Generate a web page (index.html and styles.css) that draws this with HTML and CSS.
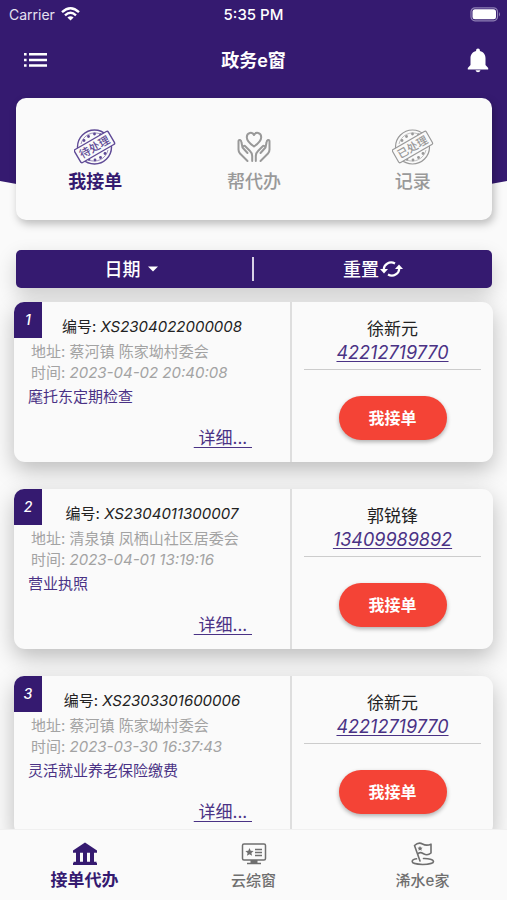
FILE: index.html
```html
<!DOCTYPE html>
<html lang="zh-CN">
<head>
<meta charset="utf-8">
<meta name="viewport" content="width=device-width, initial-scale=1">
<title>政务e窗</title>
<link rel="stylesheet" href="styles.css">
</head>
<body>
<svg class="curve" viewBox="0 0 100 206" preserveAspectRatio="none" aria-hidden="true"><path d="M0 0H100V181Q50 230 0 181Z" fill="#351a70"/></svg>
<div class="status">
  <span class="carrier">Carrier
    <svg width="19" height="14" viewBox="0 0 19 14" fill="none" stroke="#fff" stroke-width="2.4"><path d="M1 5.2Q9.500-2.600 18 5.200"/><path d="M4 8.300Q9.500 3.300 15 8.300"/><path d="M9.500 13.600L6.400 10.500Q9.500 8 12.600 10.500Z" fill="#fff" stroke="none"/></svg>
  </span>
  <span class="clock">5:35 PM</span>
  <span class="battery"><svg width="31" height="15" viewBox="0 0 31 15"><rect x="1" y=".8" width="26.500" height="13" rx="4" fill="none" stroke="#8f80b5" stroke-width="1.200"/><rect x="2.500" y="2.300" width="23.500" height="10" rx="2.500" fill="#fff"/><path d="M29 5Q31 7.300 29 9.600Z" fill="#8f80b5"/></svg></span>
</div>
<header class="bar">
  <button class="icon-btn" aria-label="菜单"><svg width="24" height="16" viewBox="0 0 24 16" fill="#fff"><path d="M0 1h2.600v2.600H0zM5 1h18v2.600H5zM0 6.700h2.600v2.600H0zM5 6.700h18v2.600H5zM0 12.200h2.600v2.600H0zM5 12.200h18v2.600H5z"/></svg></button>
  <h1>政务e窗</h1>
  <button class="icon-btn end" aria-label="通知"><svg width="22" height="25" viewBox="0 0 22 25" fill="#fff"><path d="M11 0.500c1.200 0 1.900.8 1.900 2v.4c3.800.9 5.600 3.800 5.600 7.300v6.800l2.700 3v1.500H.8v-1.500l2.700-3v-6.800c0-3.500 1.800-6.400 5.600-7.300v-.4c0-1.200.7-2 1.900-2z"/><path d="M8.500 22.300h5q-.6 2-2.500 2t-2.500-2z"/></svg></button>
</header>
<nav class="tabs">
  <a class="tab active" href="#orders">
    <svg width="42" height="38" viewBox="0 0 42 38" fill="none" stroke="currentColor" stroke-width="1.400"><circle cx="20.500" cy="19" r="17"/><path d="M7 16A14.200 14.200 0 0 1 27 6.300M34 22A14.200 14.200 0 0 1 14 31.700" stroke-width=".6"/><g fill="currentColor" stroke="none"><circle cx="10" cy="12.500" r="1.400"/><circle cx="14.500" cy="8.500" r="1.400"/><circle cx="20.500" cy="6" r="1.400"/><circle cx="26.500" cy="6.500" r="1.200"/><circle cx="21" cy="32" r="1.400"/><circle cx="26.500" cy="29.500" r="1.400"/><circle cx="31" cy="25.500" r="1.400"/><circle cx="15" cy="31.500" r="1.200"/></g><g transform="rotate(-30 20.500 19)"><rect x="1" y="11.500" width="39" height="15" rx="1.500" fill="#fafafa"/><text class="stamp" x="20.500" y="23">待处理</text></g></svg>
    <span>我接单</span>
  </a>
  <a class="tab" href="#help">
    <svg width="34" height="38" viewBox="0 0 34 38" fill="none" stroke="currentColor" stroke-width="2" stroke-linecap="round" stroke-linejoin="round"><path d="M17 18.500C12 15 9.800 12.500 9.800 9.200C9.800 4.200 15.500 3.600 17 7C18.500 3.600 24.200 4.200 24.200 9.200C24.200 12.500 22 15 17 18.500Z"/><path d="M10.500 33L3 25.500Q1.500 24 1.500 21.500V13.500Q1.500 11.500 3 12Q4.300 12.500 4.500 14.500L5.500 19.500L10.500 25M5.500 19.500Q6.500 16.500 9 19L13 23Q15.200 25 15.200 28V33"/><path d="M23.500 33L31 25.500Q32.500 24 32.500 21.500V13.500Q32.500 11.500 31 12Q29.700 12.500 29.500 14.500L28.500 19.500L23.500 25M28.500 19.500Q27.500 16.500 25 19L21 23Q18.800 25 18.800 28V33"/></svg>
    <span>帮代办</span>
  </a>
  <a class="tab" href="#records">
    <svg width="42" height="38" viewBox="0 0 42 38" fill="none" stroke="currentColor" stroke-width="1.200"><circle cx="20.500" cy="19" r="17"/><path d="M7 16A14.200 14.200 0 0 1 27 6.300M34 22A14.200 14.200 0 0 1 14 31.700" stroke-width=".6"/><g fill="currentColor" stroke="none"><circle cx="10" cy="12.500" r="1.400"/><circle cx="14.500" cy="8.500" r="1.400"/><circle cx="20.500" cy="6" r="1.400"/><circle cx="26.500" cy="6.500" r="1.200"/><circle cx="21" cy="32" r="1.400"/><circle cx="26.500" cy="29.500" r="1.400"/><circle cx="31" cy="25.500" r="1.400"/><circle cx="15" cy="31.500" r="1.200"/></g><g transform="rotate(-30 20.500 19)"><rect x="1" y="11.500" width="39" height="15" rx="1.500" fill="#fafafa"/><text class="stamp" x="20.500" y="23">已处理</text></g></svg>
    <span>记录</span>
  </a>
</nav>
<div class="filters">
  <button class="date">日期<svg width="10" height="6" viewBox="0 0 10 6" fill="#fff"><path d="M0 .5H10L5 5.500Z"/></svg></button>
  <button>重置<svg width="23" height="18" viewBox="0 0 23 18" fill="none" stroke="#fff" stroke-width="2.200"><path d="M3.800 11V9C4 4.500 9.500 .5 15 3.500"/><path d="M0 9L4 13.500L8 9Z" fill="#fff" stroke="none"/><path d="M19.200 7V9C19 13.500 13.500 17.500 8 14.500"/><path d="M15 9L19 4.500L23 9Z" fill="#fff" stroke="none"/></svg></button>
</div>
<main class="list">
  <article class="card">
    <div class="info">
      <span class="index">1</span>
      <h2>编号: <i>XS2304022000008</i></h2>
      <p class="meta">地址: 蔡河镇 陈家坳村委会</p>
      <p class="meta">时间: <i>2023-04-02 20:40:08</i></p>
      <p class="subject">麾托东定期检查</p>
      <a class="more" href="#d1">&nbsp;详细...&nbsp;</a>
    </div>
    <div class="person">
      <span class="name">徐新元</span>
      <a class="phone" href="tel:42212719770">42212719770</a>
      <hr>
      <button class="take">我接单</button>
    </div>
  </article>
  <article class="card">
    <div class="info">
      <span class="index">2</span>
      <h2>编号: <i>XS2304011300007</i></h2>
      <p class="meta">地址: 清泉镇 凤栖山社区居委会</p>
      <p class="meta">时间: <i>2023-04-01 13:19:16</i></p>
      <p class="subject">营业执照</p>
      <a class="more" href="#d2">&nbsp;详细...&nbsp;</a>
    </div>
    <div class="person">
      <span class="name">郭锐锋</span>
      <a class="phone" href="tel:13409989892">13409989892</a>
      <hr>
      <button class="take">我接单</button>
    </div>
  </article>
  <article class="card">
    <div class="info">
      <span class="index">3</span>
      <h2>编号: <i>XS2303301600006</i></h2>
      <p class="meta">地址: 蔡河镇 陈家坳村委会</p>
      <p class="meta">时间: <i>2023-03-30 16:37:43</i></p>
      <p class="subject">灵活就业养老保险缴费</p>
      <a class="more" href="#d3">&nbsp;详细...&nbsp;</a>
    </div>
    <div class="person">
      <span class="name">徐新元</span>
      <a class="phone" href="tel:42212719770">42212719770</a>
      <hr>
      <button class="take">我接单</button>
    </div>
  </article>
</main>
<nav class="bottom">
  <a class="active" href="#home">
    <svg width="26" height="24" viewBox="0 0 26 24" fill="currentColor"><path d="M13 .5L25 8.500V10.800H1V8.500ZM4 10h4v10H4zM11 10h4v10h-4zM18 10h4v10h-4zM1.500 19.700h23V21h.5v2H1v-2h.5z"/></svg>
    <span>接单代办</span>
  </a>
  <a href="#window">
    <svg width="26" height="24" viewBox="0 0 26 24" fill="none" stroke="currentColor" stroke-width="1.500"><rect x="1.500" y="2" width="23" height="16" rx="1.500"/><path d="M9.500 18h7v3h-7z" fill="currentColor" stroke="none"/><path d="M6 21.500h14M14 7.500h7M14 10.500h7M14 13.500h7"/><path d="M8.500 6l1.200 2.700 2.900.3-2.200 1.900.7 2.900-2.600-1.500-2.600 1.500.7-2.900L4.400 9l2.900-.3z" fill="currentColor" stroke="none"/></svg>
    <span>云综窗</span>
  </a>
  <a href="#family">
    <svg width="26" height="24" viewBox="0 0 26 24" fill="none" stroke="currentColor" stroke-width="1.600" stroke-linejoin="round" stroke-linecap="round"><path d="M10 19L4.500 3.500Q8.500-.2 12.500 2T21 2.200V11Q17.500 14 13.500 11.700T7.700 12.300"/><path d="M6.500 16.800C3.800 17.300 2.200 18.200 2.200 19.500C2.200 21.200 6.700 22.500 12.700 22.500S23.500 21.200 23.500 19.500C23.500 17.500 18.500 16.300 13.500 16.500"/><path d="M10 4l.8 1.600 1.800.1-1.300 1.200.5 1.800-1.800-.9-1.500 1 .3-1.800-1.300-1.200 1.700-.2z" fill="currentColor" stroke="none"/></svg>
    <span>浠水e家</span>
  </a>
</nav>
</body>
</html>
```
FILE: styles.css
```css
* { box-sizing: border-box; }
body {
  margin: 0;
  height: 100vh;
  display: flex;
  flex-direction: column;
  position: relative;
  overflow: hidden;
  background: #fafafa;
  color: #222;
  font: 15px/21px Inter, "Noto Sans CJK SC", sans-serif;
}
button { font: inherit; color: inherit; border: 0; background: none; padding: 0; cursor: pointer; }
a { color: inherit; text-decoration: none; }
h1, h2, p { margin: 0; }
svg { display: block; flex: none; }

.curve { position: absolute; top: 0; left: 0; width: 100%; height: 206px; z-index: -1; }

.status, .bar {
  display: grid;
  grid-template-columns: 1fr auto 1fr;
  align-items: center;
  color: #fff;
}
.status { height: 28px; padding: 0 6px; }
.carrier { display: flex; align-items: center; gap: 6px; padding-left: 3px; color: #e6e1f0; font-size: 14px; }
.clock { font-weight: 500; }
.battery { justify-self: end; }

.bar { height: 64px; padding: 0 18px; }
.bar h1 { font-size: 18px; font-weight: 600; }
.icon-btn { justify-self: start; padding-left: 6px; }
.icon-btn.end { justify-self: end; padding-left: 0; }

.tabs {
  display: flex;
  height: 122px;
  margin: 6px 15px 0 16px;
  padding-top: 30px;
  border-radius: 10px;
  background: #fafafa;
  box-shadow: 2px 4px 8px rgba(0, 0, 0, .25);
  flex: none;
}
.tab {
  flex: 1;
  display: flex;
  flex-direction: column;
  align-items: center;
  gap: 4px;
  color: #999;
  font-size: 18px;
  line-height: 24px;
  font-weight: 500;
}
.tab.active { color: #351a70; font-weight: 600; }
.tab.active svg { color: #5f4a96; }
.stamp { font: 500 11px "Noto Sans CJK SC", sans-serif; fill: currentColor; stroke: none; text-anchor: middle; }

.filters {
  display: grid;
  grid-template-columns: 1fr 1fr;
  align-items: center;
  height: 38px;
  margin: 30px 15px 14px 16px;
  border-radius: 5px;
  background: #351a70;
  box-shadow: 0 8px 20px rgba(0, 0, 0, .18);
  color: #fff;
  font-size: 18px;
  font-weight: 500;
  flex: none;
}
.filters button { height: 24px; display: flex; align-items: center; justify-content: center; gap: 1px; }
.filters .date { gap: 7px; padding-right: 6px; border-right: 2px solid #d8d2e6; }

.list { flex: 1; min-height: 0; padding: 0 14px; display: flex; flex-direction: column; gap: 27px; }
.card {
  flex: none;
  display: grid;
  grid-template-columns: 276fr 203fr;
  border-radius: 11px;
  background: #fafafa;
  box-shadow: 0 8px 22px rgba(0, 0, 0, .25);
}
.info { position: relative; display: flex; flex-direction: column; padding: 14px 14px 12px; height: 160px; }
.index {
  position: absolute;
  top: 0;
  left: 0;
  width: 28px;
  height: 36px;
  border-radius: 10px 0 0 0;
  background: #351a70;
  color: #fff;
  font-size: 14px;
  font-style: italic;
  font-weight: 500;
  line-height: 36px;
  text-align: center;
}
.info h2 { font-size: 15px; font-weight: 400; text-align: center; margin-bottom: 4px; }
.meta { color: #a3a3a3; padding-left: 3px; }
.subject { color: #4a3285; margin-top: 3px; }
.more {
  align-self: flex-end;
  margin: auto 24px 0 0;
  font-size: 17px;
  line-height: 24px;
  color: #4a3285;
  text-decoration: underline;
  text-decoration-thickness: 1px;
  text-underline-offset: 3px;
}
.person {
  display: flex;
  flex-direction: column;
  align-items: center;
  padding: 15px 12px 0;
  border-left: 2px solid #dedede;
  font-size: 17px;
  line-height: 24px;
}
.phone { color: #4a3285; font-size: 18px; font-style: italic; text-decoration: underline; text-decoration-thickness: 1px; text-underline-offset: 2px; }
.person hr { width: 100%; height: 1px; border: 0; margin: 4px 0 26px; background: #ccc; }
.take {
  width: 108px;
  height: 44px;
  border-radius: 22px;
  background: #f44336;
  color: #fff;
  font-size: 16px;
  font-weight: 600;
  box-shadow: 0 2px 4px rgba(0, 0, 0, .3);
}

.bottom {
  position: relative;
  display: flex;
  height: 71px;
  padding-top: 12px;
  background: #fafafa;
  border-top: 1px solid #f0f0f0;
  flex: none;
}
.bottom a {
  flex: 1;
  display: flex;
  flex-direction: column;
  align-items: center;
  gap: 2px;
  color: #6f6f6f;
  font-size: 15px;
  line-height: 26px;
  font-weight: 500;
}
.bottom a.active { color: #351a70; font-size: 17px; line-height: 24px; font-weight: 600; }
```
